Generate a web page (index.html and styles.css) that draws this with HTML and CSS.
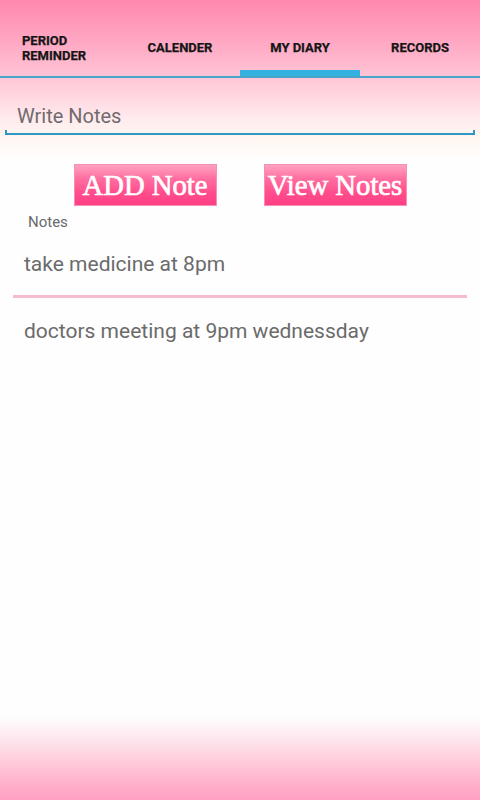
FILE: index.html
```html
<!DOCTYPE html>
<html>
<head>
<meta charset="utf-8">
<link rel="stylesheet" href="styles.css">
</head>
<body>
<div class="app">
  <div class="top">
    <div class="tabs">
      <div class="tab tab-first"><span class="tab-label">PERIOD<br>REMINDER</span></div>
      <div class="tab"><span class="tab-label">CALENDER</span></div>
      <div class="tab active"><span class="tab-label">MY DIARY</span></div>
      <div class="tab"><span class="tab-label">RECORDS</span></div>
    </div>
    <div class="tab-line"></div>
    <div class="field">
      <div class="field-text">Write Notes</div>
      <div class="field-line"></div>
    </div>
  </div>
  <div class="buttons">
    <div class="btn">ADD Note</div>
    <div class="btn">View Notes</div>
  </div>
  <div class="label">Notes</div>
  <div class="list">
    <div class="item">take medicine at 8pm</div>
    <div class="divider"></div>
    <div class="item">doctors meeting at 9pm wednessday</div>
  </div>
  <div class="bottom"></div>
</div>
</body>
</html>
```
FILE: styles.css
```css
html, body {
  margin: 0;
  padding: 0;
  background: #fefefe;
}
.app {
  width: 480px;
  height: 800px;
  display: flex;
  flex-direction: column;
  font-family: Roboto, "Liberation Sans", sans-serif;
  overflow: hidden;
}
.top {
  height: 158px;
  background: linear-gradient(to bottom, #ff88ae 0px, #ffa6c2 40px, #ffc4d5 76px, #ffd6e0 95px, #ffecee 120px, #fff7f2 142px, #fefefe 158px);
}
.tabs {
  display: grid;
  grid-template-columns: repeat(4, 120px);
  height: 76px;
}
.tab {
  display: flex;
  align-items: center;
  justify-content: center;
  box-sizing: border-box;
  padding-top: 25px;
  border-bottom: 6px solid transparent;
}
.tab-first {
  padding-right: 12px;
}
.tab.active {
  border-bottom-color: #33b1e0;
}
.tab-label {
  font-size: 13px;
  font-weight: bold;
  line-height: 15px;
  color: #151515;
  -webkit-text-stroke: 0.25px #151515;
}
.tab-line {
  height: 2px;
  background: #4aa3c9;
}
.field {
  margin: 26px 5px 0;
}
.field-text {
  padding-left: 12px;
  font-size: 20px;
  line-height: 24px;
  color: #716b6d;
}
.field-line {
  margin-top: 2px;
  height: 3px;
  border: 2px solid #2d98c0;
  border-top: none;
}
.buttons {
  display: flex;
  justify-content: center;
  gap: 47px;
  margin-top: 6px;
}
.btn {
  width: 143px;
  height: 42px;
  box-sizing: border-box;
  border: 1px solid #f58fb6;
  background: linear-gradient(to bottom, #ffa2c2 0%, #ff6da0 35%, #ff4d8c 70%, #ff3f84 100%);
  color: #ffffff;
  font-family: "Liberation Serif", "Times New Roman", serif;
  font-size: 28.7px;
  line-height: 40px;
  text-align: center;
  white-space: nowrap;
  -webkit-text-stroke: 0.7px #ffffff;
}
.label {
  margin-top: 7px;
  padding-left: 28px;
  font-size: 15px;
  line-height: 18px;
  color: #6a6a6a;
}
.list {
  display: flex;
  flex-direction: column;
}
.item {
  padding: 21px 24px 19px;
  font-size: 21px;
  line-height: 24px;
  color: #6b6b6b;
}
.divider {
  height: 3px;
  margin: 0 13px;
  background: #f5bcd0;
}
.bottom {
  margin-top: auto;
  height: 84px;
  background: linear-gradient(to bottom, #fefefe 0%, #fde9ef 25%, #ffd0de 50%, #ffb6ce 75%, #ffa0c2 100%);
}
```
